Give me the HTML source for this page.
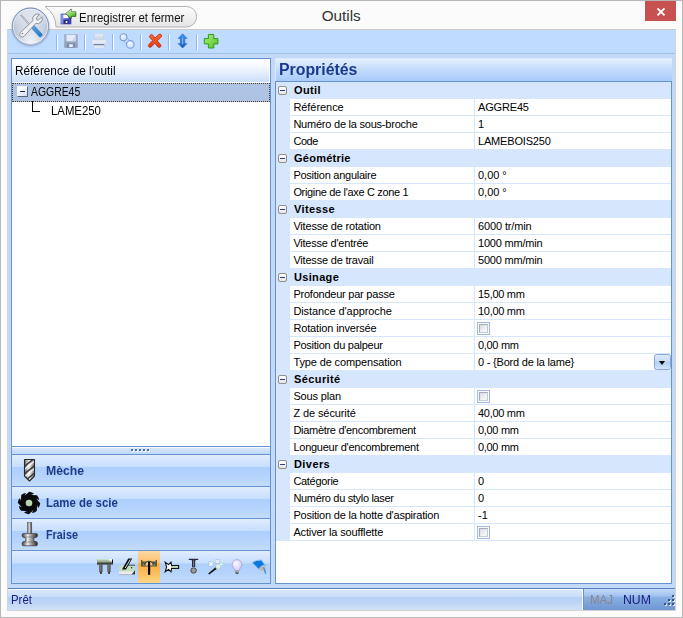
<!DOCTYPE html>
<html lang="fr"><head><meta charset="utf-8"><title>Outils</title>
<style>
*{box-sizing:border-box;margin:0;padding:0}
html,body{width:683px;height:618px;overflow:hidden;background:#fff}
body{position:relative;font-family:"Liberation Sans",sans-serif;font-size:12px;color:#000}
.abs{position:absolute}
#frame{position:absolute;left:0;top:0;width:683px;height:618px;border:1px solid #b7b7b7;background:#fbfbfb}
#title{position:absolute;left:1px;top:1px;width:681px;height:28px;background:#fbfbfb}
#title .t{position:absolute;left:-1.3px;width:683px;top:5.5px;text-align:center;font-size:15.3px;color:#333;letter-spacing:0}
#close{position:absolute;left:645px;top:1px;width:31px;height:20px;background:#c75050}
#main{position:absolute;left:7px;top:29px;width:669px;height:582px;background:#c4d9f8;border:1px solid #d3d3d3;border-top-color:#c9c9c9}
#tbline{position:absolute;left:8px;top:30px;width:667px;height:24px;background:#bfdbff;border-bottom:1px solid #a2c2ee}
.sep{position:absolute;top:34px;width:2px;height:16px;border-left:1px solid #8db6f1;border-right:1px solid #fff}
/* left panel */
#lp{position:absolute;left:11px;top:58px;width:260px;height:526px;border:1px solid #6593cf;background:#fff}
#lph{position:absolute;left:0;top:0;width:258px;height:24px;background:linear-gradient(#ffffff,#f3f8ff 35%,#cbdefa);border-right:1px solid #fff;border-bottom:1px solid #f4f8fe}
#lph span{position:absolute;left:3px;top:5px;font-size:12px;white-space:nowrap;transform-origin:0 0;transform:scaleX(0.982)}
#sel{position:absolute;left:0;top:24px;width:258px;height:19px;background:#afc3e5;border:1px dotted #4f3d1c}
.tx{position:absolute;font-size:12px;white-space:nowrap;transform-origin:0 0}
#split{position:absolute;left:0;top:387px;width:258px;height:9px;border-top:1px solid #6593cf;border-bottom:1px solid #6593cf;background:linear-gradient(#f6faff 0,#f6faff 1px,#d9e8fc 1px,#bed9fd)}
.btn{position:absolute;left:0;width:258px;height:32px;border-bottom:1px solid #6593cf;background:linear-gradient(#e1edfe 0,#c6defe 38%,#adcffc 40%,#b6d4fc 70%,#c4dcfd 100%)}
.btn b{position:absolute;left:33.5px;top:9px;font-size:12.5px;color:#1e3c8a;white-space:nowrap;transform-origin:0 0}
#irow{position:absolute;left:0;top:492px;width:258px;height:32px;background:linear-gradient(#e1edfe 0,#c6defe 38%,#adcffc 40%,#b6d4fc 70%,#c4dcfd 100%)}
#isel{position:absolute;left:126px;top:492px;width:22px;height:32px;background:linear-gradient(#fcd9a4 0,#fcbf6c 38%,#fbab42 40%,#fcc264 75%,#fdd98c 100%)}
/* right panel */
#rph{position:absolute;left:275px;top:58px;width:397px;height:23px;background:linear-gradient(#e4effe,#c5dcfc 45%,#a9cbfa);border-left:1px solid #dce9fc;border-top:1px solid #dce9fc}
#rph b{position:absolute;left:3px;top:1.5px;font-size:16px;color:#1c3a8c;letter-spacing:0;white-space:nowrap;transform-origin:0 0;transform:scaleX(0.99)}
#grid{position:absolute;left:275px;top:81px;width:397px;height:503px;border:1px solid #6593cf;background:#fff;font-size:11px}
#ind{position:absolute;left:0;top:0;width:14px;height:459px;background:#d6e6fc}
.cat{position:absolute;left:0;width:395px;height:17px;background:#d6e6fc}
.cat b{position:absolute;left:18px;top:2px;font-size:11px}
.pm{position:absolute;left:2px;top:4px;width:9px;height:9px;border:1px solid #8f8f8f;border-radius:2px;background:linear-gradient(#fff,#e6e6e6)}
.pm i{position:absolute;left:1px;top:3px;width:5px;height:1px;background:#2c3f9a}
.row{position:absolute;left:14px;width:381px;height:17px;border-bottom:1px solid #d6e6fc}
.lb{position:absolute;left:3.4px;top:2px;white-space:nowrap}
.val{position:absolute;left:184px;top:0;width:197px;height:16px;border-left:1px solid #d6e6fc}
.vt{position:absolute;left:3px;top:2px;white-space:nowrap}
.cb{position:absolute;left:2px;top:2px;width:13px;height:13px;border:1px solid #a5b9db;background:#f9f9f9}
.cb:after{content:"";position:absolute;box-sizing:border-box;left:1px;top:1px;width:9px;height:9px;border:1px solid #a3acba;border-right-color:#c3c9d2;border-bottom-color:#c9ced6;background:linear-gradient(135deg,#d9dce1,#f4f4f5 70%)}
.dd{position:absolute;left:179px;top:0;width:17px;height:16px;border:1px solid #86a9db;border-radius:2.5px;background:linear-gradient(#dde9f9 0,#c9dcf5 6px,#b5cff0 7px,#c4daf5 11px,#d5e5f9 14px)}
.dd i{position:absolute;left:4px;top:6px;width:0;height:0;border-left:3.8px solid transparent;border-right:3.8px solid transparent;border-top:4.4px solid #000}
/* status */
#sb{position:absolute;left:8px;top:588px;width:667px;height:22px;border-top:1px solid #5682c4;background:linear-gradient(#fff 0,#fff 1px,#d8e7fb 1px,#c9ddf8 8px,#b5d0f5 8px,#bdd5f6 14px,#d0e1f8 21px)}
#sbr{position:absolute;left:575px;top:0;width:92px;height:21px;background:linear-gradient(#c6dcfa 0,#bdd5f8 1px,#a2c2f0 7px,#8ab0e6 8px,#7da4dc 14px,#6f96d2 21px);border-left:1px solid #6a92cc}
#sbw{position:absolute;left:574px;top:0;width:1px;height:21px;background:#fff}
#sb .tx{color:#181c7c}
</style></head><body>
<div id="frame"></div>
<div id="title"><div class="t">Outils</div></div>
<div id="close"><svg class="abs" style="left:11px;top:6px" width="10" height="10" viewBox="0 0 10 10"><path d="M1.5 1.4 L8.5 8.4 M8.5 1.4 L1.5 8.4" stroke="#fff" stroke-width="1.9"/></svg></div>
<div id="main"></div>
<div id="tbline"></div>

<!-- quick access pill -->
<svg class="abs" style="left:36px;top:2px" width="170" height="30" viewBox="0 0 170 30">
<defs><linearGradient id="pg" x1="0" y1="0" x2="0" y2="1"><stop offset="0" stop-color="#fdfdfd"/><stop offset="0.5" stop-color="#f1f1f2"/><stop offset="1" stop-color="#e4e4e6"/></linearGradient></defs>
<path d="M9 4.5 H150.4 A10.25 10.25 0 0 1 150.4 25 H20 A25 25 0 0 0 9 4.5 Z" fill="url(#pg)" stroke="#b2b2b4" stroke-width="1"/>
</svg>
<div class="tx" style="left:78.6px;top:10.5px;font-size:12px;color:#111;transform:scaleX(0.958)">Enregistrer et fermer</div>

<!-- orb -->
<svg class="abs" style="left:10px;top:6px;overflow:visible;filter:drop-shadow(0 1px 1px rgba(70,90,130,.5))" width="42" height="42" viewBox="0 0 42 42">
<defs>
<radialGradient id="og" cx="0.5" cy="0.42" r="0.62"><stop offset="0" stop-color="#dbe2ed"/><stop offset="0.6" stop-color="#c8d1e1"/><stop offset="1" stop-color="#a7b5ce"/></radialGradient>
<radialGradient id="og2" cx="0.5" cy="1.02" r="0.55"><stop offset="0" stop-color="#fff" stop-opacity="0.95"/><stop offset="0.6" stop-color="#fff" stop-opacity="0.35"/><stop offset="1" stop-color="#fff" stop-opacity="0"/></radialGradient>
<linearGradient id="ob" x1="0" y1="0" x2="0" y2="1"><stop offset="0" stop-color="#6c86b4"/><stop offset="0.6" stop-color="#8da0c4"/><stop offset="1" stop-color="#b4c0d8"/></linearGradient>
<linearGradient id="ogl" x1="0" y1="0" x2="0" y2="1"><stop offset="0" stop-color="#fff" stop-opacity="0.75"/><stop offset="1" stop-color="#fff" stop-opacity="0.1"/></linearGradient>
<linearGradient id="hb" x1="0" y1="0" x2="1" y2="1"><stop offset="0" stop-color="#5aa6e6"/><stop offset="1" stop-color="#1f74c2"/></linearGradient>
</defs>
<circle cx="20.5" cy="20.2" r="18.2" fill="url(#og)"/>
<circle cx="20.5" cy="20.2" r="18.2" fill="url(#og2)"/>
<path d="M4 17.5 A16.6 16.6 0 0 1 37 17.5 Q20.5 23.5 4 17.5Z" fill="url(#ogl)" opacity="0.55"/>
<circle cx="20.5" cy="20.2" r="17.3" fill="none" stroke="#fff" stroke-width="0.9" opacity="0.7"/>
<circle cx="20.5" cy="20.2" r="18.2" fill="none" stroke="url(#ob)" stroke-width="1"/>
<!-- screwdriver -->
<path d="M10.6 9.2 L11.6 9 L21 19 L19.6 20.2 Z" fill="#d4d6da" stroke="#8a8c92" stroke-width="0.6"/>
<path d="M20.9 21.4 L23.9 19.3 L32.3 28.3 Q32.4 29.4 31.3 30.4 Q30.2 31.2 29.3 30.8 Z" fill="url(#hb)" stroke="#2a78c0" stroke-width="0.5"/>
<!-- wrench -->
<path d="M23 14.5 A4.8 4.8 0 0 1 29.57 8.47 L26.6 11.5 Q26 13.2 27.1 14 Q28 14.6 28.9 13.7 L31.83 10.73 A4.8 4.8 0 0 1 25.8 17.3 L14.2 30.2 A2.4 2.4 0 0 1 10.4 26.6 Z" fill="#f0f1f3" stroke="#868a92" stroke-width="0.9" stroke-linejoin="round"/>
<circle cx="12.4" cy="27.6" r="0.8" fill="#7a7d86"/>
</svg>

<!-- save&close icon -->
<svg class="abs" style="left:60px;top:8px" width="18" height="18" viewBox="0 0 18 18">
<defs><linearGradient id="fl" x1="0" y1="0" x2="1" y2="0"><stop offset="0" stop-color="#9fc2f6"/><stop offset="0.3" stop-color="#5a66d6"/><stop offset="1" stop-color="#3a3abc"/></linearGradient>
<linearGradient id="ga" x1="0" y1="0" x2="1" y2="1"><stop offset="0" stop-color="#d4f2c4"/><stop offset="0.5" stop-color="#7fd450"/><stop offset="1" stop-color="#3c9a24"/></linearGradient></defs>
<rect x="1" y="6" width="10" height="10" fill="url(#fl)" stroke="#3236b0" stroke-width="0.6"/>
<rect x="3.3" y="6.6" width="5.2" height="3.6" fill="#fff"/>
<rect x="3.6" y="12.2" width="5" height="3.4" fill="#20246a"/>
<rect x="5.6" y="13" width="1.8" height="2" fill="#e8f4e8"/>
<path d="M5.8 5.6 L11.2 1 L11.2 3.8 L15.8 3.8 L15.8 8.4 L11.2 8.4 L11.2 11 Z" fill="url(#ga)" stroke="#1f4a18" stroke-width="0.7" stroke-linejoin="round"/>
<path d="M6.6 5.5 L10.7 2 L10.7 4.3 L15.3 4.3" fill="none" stroke="#d4f4c4" stroke-width="0.7" opacity="0.9"/>
</svg>

<!-- toolbar: save (disabled) -->
<svg class="abs" style="left:64px;top:34px" width="14" height="14" viewBox="0 0 14 14">
<defs><linearGradient id="sv" x1="0" y1="0" x2="0" y2="1"><stop offset="0" stop-color="#aab6cc"/><stop offset="1" stop-color="#8c9ab6"/></linearGradient></defs>
<rect x="0.3" y="0.3" width="13.4" height="13.4" rx="0.8" fill="url(#sv)" stroke="#9eabc4" stroke-width="0.6"/>
<rect x="2.5" y="0.8" width="9" height="6.4" fill="#e4ebf8"/>
<path d="M11.5 2.5 L11.5 7.2 L7 7.2 Z" fill="#cfd9ec"/>
<rect x="3" y="9.2" width="8" height="4.5" fill="#7f8dab"/>
<rect x="5.2" y="10.2" width="3.6" height="2.8" fill="#e9effa"/>
</svg>
<!-- toolbar: print (disabled) -->
<svg class="abs" style="left:91px;top:33px" width="16" height="16" viewBox="0 0 16 16">
<defs><linearGradient id="pr1" x1="0" y1="0" x2="0" y2="1"><stop offset="0" stop-color="#eef2fa"/><stop offset="1" stop-color="#b9c4d8"/></linearGradient>
<linearGradient id="pr2" x1="0" y1="0" x2="0" y2="1"><stop offset="0" stop-color="#eef2fa"/><stop offset="1" stop-color="#d2dbec"/></linearGradient></defs>
<rect x="3.5" y="0.8" width="9" height="7.5" rx="0.8" fill="url(#pr1)" stroke="#c4cfe4" stroke-width="0.5"/>
<rect x="0.6" y="6.8" width="14.8" height="6.2" rx="1.6" fill="url(#pr2)" stroke="#c3cee4" stroke-width="0.6"/>
<rect x="2.6" y="11" width="10.8" height="1.3" fill="#6e80a4"/>
<rect x="2.8" y="12.6" width="10.4" height="2.6" rx="0.6" fill="#e6ecf7" stroke="#bcc8de" stroke-width="0.5"/>
</svg>
<!-- toolbar: link -->
<svg class="abs" style="left:119px;top:33px" width="16" height="16" viewBox="0 0 16 16">
<defs><radialGradient id="lk" cx="0.4" cy="0.35" r="0.7"><stop offset="0" stop-color="#f4f9ff"/><stop offset="1" stop-color="#c3d8f6"/></radialGradient></defs>
<path d="M3 6 L9.6 13 L12.8 10 L6.2 2.8 Z" fill="#cfe0f6" stroke="#8fafe0" stroke-width="0.9"/>
<circle cx="4.5" cy="4.2" r="3.4" fill="url(#lk)" stroke="#7c9edc" stroke-width="1.1"/>
<circle cx="11.3" cy="11.4" r="3.8" fill="url(#lk)" stroke="#7c9edc" stroke-width="1.1"/>
</svg>
<!-- toolbar: red X -->
<svg class="abs" style="left:147px;top:33px" width="16" height="16" viewBox="0 0 16 16">
<defs><linearGradient id="rx" x1="0" y1="0" x2="0" y2="1"><stop offset="0" stop-color="#fa6a3a"/><stop offset="1" stop-color="#e23612"/></linearGradient></defs>
<path d="M3.2 2.2 Q4.6 0.8 5.8 2.2 L8 5 L11.6 1.6 Q13.2 0.6 14.4 1.8 Q15.2 3 14 4.2 L10.2 7.8 L13.6 11.6 Q14.6 13 13.4 14 Q12 15 10.8 13.8 L7.8 10.2 L4.4 13.8 Q3 15 1.8 13.8 Q0.8 12.4 2 11.2 L5.6 7.6 L2.8 4.4 Q2 3.2 3.2 2.2 Z" fill="url(#rx)" stroke="#c22c0c" stroke-width="0.8"/>
</svg>
<!-- toolbar: up/down -->
<svg class="abs" style="left:176px;top:33px" width="14" height="16" viewBox="0 0 14 16">
<defs><linearGradient id="ud" x1="0" y1="0" x2="0" y2="1"><stop offset="0" stop-color="#3a9af8"/><stop offset="1" stop-color="#1a56b8"/></linearGradient>
<linearGradient id="ud2" x1="0" y1="0" x2="1" y2="0"><stop offset="0" stop-color="#2a7ae0"/><stop offset="0.5" stop-color="#9cc0ee"/><stop offset="1" stop-color="#2a6ad0"/></linearGradient></defs>
<path d="M6.6 0.8 L11 5.4 L8.8 5.4 L8.8 10.6 L11 10.6 L6.6 15 L2.2 10.6 L4.4 10.6 L4.4 5.4 L2.2 5.4 Z" fill="url(#ud)" stroke="#1f6ad8" stroke-width="0.6" stroke-linejoin="round"/>
<rect x="5.3" y="4.4" width="2.6" height="7" fill="url(#ud2)" opacity="0.85"/>
</svg>
<!-- toolbar: plus -->
<svg class="abs" style="left:203px;top:33px" width="16" height="16" viewBox="0 0 16 16">
<defs><linearGradient id="gp" x1="0" y1="0" x2="1" y2="1"><stop offset="0" stop-color="#b4f07c"/><stop offset="1" stop-color="#4cc224"/></linearGradient></defs>
<path d="M5.4 1.5 H10.8 V5.6 H14.9 V10.9 H10.8 V15 H5.4 V10.9 H1.3 V5.6 H5.4 Z" fill="url(#gp)" stroke="#2c9c1c" stroke-width="1" stroke-linejoin="round"/>
</svg>

<!-- toolbar -->
<div class="sep" style="left:56px"></div><div class="sep" style="left:84px"></div><div class="sep" style="left:112px"></div>
<div class="sep" style="left:140px"></div><div class="sep" style="left:168px"></div><div class="sep" style="left:196px"></div>

<div id="lp">
 <div id="lph"><span>Référence de l'outil</span></div>
 <div id="sel"></div>
 <div class="tx" style="left:19.4px;top:26px;transform:scaleX(0.868)">AGGRE45</div>
 <div class="tx" style="left:38.7px;top:45px;transform:scaleX(0.947)">LAME250</div>
 <div class="abs" style="left:20px;top:42px;width:8px;height:11px;border-left:1px solid #000;border-bottom:1px solid #000"></div>
 <div class="abs" style="left:5px;top:27px;width:11px;height:11px;border:1px solid #596681;border-top-color:#eef2fa;border-left-color:#eef2fa;background:linear-gradient(135deg,#fff 20%,#d2dcee)"><i class="abs" style="left:2px;top:4px;width:5px;height:1.4px;background:#1f2a44"></i></div>
 <div id="split"><i class="abs" style="left:119px;top:2px;width:2px;height:2px;background:#4a6fb5;box-shadow:1px 1px 0 #fff"></i><i class="abs" style="left:123px;top:2px;width:2px;height:2px;background:#4a6fb5;box-shadow:1px 1px 0 #fff"></i><i class="abs" style="left:127px;top:2px;width:2px;height:2px;background:#4a6fb5;box-shadow:1px 1px 0 #fff"></i><i class="abs" style="left:131px;top:2px;width:2px;height:2px;background:#4a6fb5;box-shadow:1px 1px 0 #fff"></i><i class="abs" style="left:135px;top:2px;width:2px;height:2px;background:#4a6fb5;box-shadow:1px 1px 0 #fff"></i></div>
 <div class="btn" style="top:396px"><b style="transform:scaleX(0.98)">Mèche</b></div>
 <div class="btn" style="top:428px"><b style="transform:scaleX(0.914)">Lame de scie</b></div>
 <div class="btn" style="top:460px"><b style="transform:scaleX(0.867)">Fraise</b></div>
 <div id="irow"></div><div id="isel"></div>
</div>


<!-- Mèche icon (drill bit) -->
<svg class="abs" style="left:22px;top:458px" width="16" height="25" viewBox="0 0 16 25">
<defs><linearGradient id="db" x1="0" y1="0" x2="1" y2="0"><stop offset="0" stop-color="#6a6a6a"/><stop offset="0.45" stop-color="#f4f4f4"/><stop offset="1" stop-color="#7a7a7a"/></linearGradient>
<clipPath id="dbc"><path d="M2.5 1.5 H12.5 V18 L7.5 23 L2.5 18 Z"/></clipPath></defs>
<path d="M2.5 1.5 H12.5 V18 L7.5 23 L2.5 18 Z" fill="url(#db)"/>
<g clip-path="url(#dbc)" stroke="#3c3c3c" stroke-width="1.5" fill="none">
<path d="M1 9.5 L14 -1"/><path d="M1 17 L14 6.5"/><path d="M1 24.5 L14 14"/>
</g>
<g clip-path="url(#dbc)" stroke="#fff" stroke-width="1.2" fill="none" opacity="0.9">
<path d="M1 12.5 L14 2"/><path d="M1 20 L14 9.5"/>
</g>
<path d="M2.5 1.5 H12.5 V18 L7.5 23 L2.5 18 Z" fill="none" stroke="#2a2a2a" stroke-width="1.1" stroke-linejoin="round"/>
</svg>
<!-- Lame de scie icon -->
<svg class="abs" style="left:17px;top:491px" width="24" height="24" viewBox="-12 -12 24 24">
<g fill="#0a0a0a">
<circle r="8.5"/>
<g id="tooth"><path d="M-4 -7.4 L0.2 -11.2 Q3.4 -10.8 5 -9.2 L2 -8 L3 -7.2 Z"/></g>
<use href="#tooth" transform="rotate(45)"/><use href="#tooth" transform="rotate(90)"/><use href="#tooth" transform="rotate(135)"/>
<use href="#tooth" transform="rotate(180)"/><use href="#tooth" transform="rotate(225)"/><use href="#tooth" transform="rotate(270)"/><use href="#tooth" transform="rotate(315)"/>
</g>
<circle r="3.3" fill="#b9d6b2"/>
</svg>
<!-- Fraise icon -->
<svg class="abs" style="left:21px;top:521px" width="18" height="26" viewBox="0 0 18 26">
<defs><linearGradient id="fr" x1="0" y1="0" x2="1" y2="0"><stop offset="0" stop-color="#3a3a3a"/><stop offset="0.35" stop-color="#ececec"/><stop offset="0.65" stop-color="#8e8e8e"/><stop offset="1" stop-color="#2a2a2a"/></linearGradient></defs>
<rect x="6.6" y="1.5" width="4.2" height="12" fill="url(#fr)" stroke="#555" stroke-width="0.5"/>
<path d="M2.2 12.6 H15.4 Q16.4 12.6 16.4 13.8 V15 Q16.4 16 15.2 16.2 L12.8 17 V20 L15.4 20.8 Q16.4 21 16.4 22 V23.6 Q16.4 24.8 15.2 24.8 H2.6 Q1.2 24.8 1.2 23.6 V22 Q1.2 21 2.4 20.8 L4.8 20 V17 L2.4 16.2 Q1.2 16 1.2 15 V13.8 Q1.2 12.6 2.2 12.6 Z" fill="url(#fr)" stroke="#3a3a3a" stroke-width="0.7"/>
<path d="M1.6 16 H16 M1.6 21 H16" stroke="#444" stroke-width="0.6" opacity="0.7"/>
</svg>

<!-- small icons row -->
<svg class="abs" style="left:96px;top:557px" width="18" height="18" viewBox="0 0 18 18">
<rect x="1" y="2" width="16" height="5.4" fill="#c9dfc2"/>
<rect x="1" y="3.6" width="14" height="1" fill="#7e8e7c"/>
<rect x="13" y="2" width="3" height="1.6" fill="#fff"/>
<path d="M1 6.4 H17 V2.4 H16 V5.6 H1 Z M1 6.2 H17 V7.6 H1 Z" fill="#111"/>
<rect x="3.4" y="7.6" width="3" height="7.6" fill="#2e2e2e"/><rect x="4.3" y="7.6" width="1.1" height="7" fill="#9a9a8a"/>
<rect x="11.5" y="7.6" width="3" height="7.6" fill="#2e2e2e"/><rect x="12.4" y="7.6" width="1.1" height="7" fill="#9a9a8a"/>
<rect x="4.2" y="15" width="1.5" height="2" fill="#222"/><rect x="12.3" y="15" width="1.5" height="2" fill="#222"/>
</svg>
<svg class="abs" style="left:118px;top:557px" width="18" height="19" viewBox="0 0 18 19">
<path d="M1 8.2 H17 V14.6 H1 Z" fill="#c2dfba"/>
<path d="M1 14.4 H17 V17.6 H1 Z" fill="#ececec"/>
<path d="M17 13.2 V17.6 H13.6 Z" fill="#3a3a2a"/>
<path d="M9 8.2 H17" stroke="#222" stroke-width="0.8"/>
<path d="M1 17.6 H14" stroke="#999" stroke-width="0.6"/>
<path d="M10.2 1.6 L14.2 1.6 L8 12.4 L4 12.4 Z" fill="#111"/>
<path d="M12.2 2.6 L7.2 11" stroke="#eee" stroke-width="0.9"/>
<circle cx="3" cy="11" r="0.6" fill="#fff"/><circle cx="13.6" cy="10.8" r="0.7" fill="#222"/>
</svg>
<svg class="abs" style="left:140px;top:558px" width="18" height="18" viewBox="0 0 18 18">
<path d="M1 2.1 H2.4 V3.5 H15.6 V2.1 H17 V8.5 H1 Z" fill="#575a3e"/>
<path d="M5.2 7.6 A3.8 3.8 0 0 1 12.8 7.6 Z" fill="#f4c68c"/>
<path d="M4.6 7.6 A4.4 4.4 0 0 1 13.4 7.6" fill="none" stroke="#4a4d34" stroke-width="1.1"/>
<path d="M3 6.4 L4.4 7.4 M15 6.4 L13.6 7.4" stroke="#f4c68c" stroke-width="0.7"/>
<rect x="8" y="3.8" width="2.2" height="13" fill="#050505"/>
</svg>
<svg class="abs" style="left:164px;top:561px" width="16" height="12" viewBox="0 0 16 12">
<path d="M1.2 1.2 L4.6 3.6 L7 1.2 L7.6 4.6 L14.6 4.6 V7.4 H7.6 L7 10.8 L4.6 8.4 L1.2 10.8 L2.6 6 Z" fill="#f6f8f6" stroke="#111" stroke-width="1.1" stroke-linejoin="miter"/>
<rect x="8.6" y="5.2" width="5.4" height="1.4" fill="#bcd8b8"/>
</svg>
<svg class="abs" style="left:188px;top:558px" width="12" height="17" viewBox="0 0 12 17">
<path d="M0.8 0.8 H10.2 V2 H7.6 L7.2 3.4 V9 H4 V3.4 L3.6 2 H0.8 Z" fill="#2a2a3a"/>
<rect x="5" y="2.4" width="1.2" height="6.4" fill="#77777f"/>
<circle cx="5.6" cy="12.5" r="2.7" fill="#9a9a9a" stroke="#3a3a3a" stroke-width="0.9"/>
</svg>
<svg class="abs" style="left:206px;top:558px" width="18" height="18" viewBox="0 0 18 18">
<path d="M2.2 15.4 L3.2 16.4 L12.4 9.8 L11 8 Z" fill="#161616"/>
<circle cx="12.3" cy="8.5" r="2.7" fill="#dcefe9" stroke="#a9c6c6" stroke-width="0.7"/>
<path d="M3.6 3.2 L5 4.6 L6.4 3.2 L7.8 4.6 L6.4 6 L7.8 7.4 L6.4 8.8 L5 7.4 L3.6 8.8 L2.2 7.4 L3.6 6 L2.2 4.6 Z" fill="#f2f8fe" stroke="#86a8d6" stroke-width="0.6"/>
<path d="M10.2 1.2 L11.4 2.4 L12.6 1.2 L13.8 2.4 L12.6 3.6 L13.8 4.8 L12.6 6 L11.4 4.8 L10.2 6 L9 4.8 L10.2 3.6 L9 2.4 Z" fill="#f4f9fe" stroke="#8cacd8" stroke-width="0.6"/>
<circle cx="15.2" cy="6.4" r="1.3" fill="#f8fcff" stroke="#a9c6ea" stroke-width="0.5"/>
</svg>
<svg class="abs" style="left:231px;top:558px" width="12" height="17" viewBox="0 0 12 17">
<defs><radialGradient id="bl" cx="0.4" cy="0.35" r="0.7"><stop offset="0" stop-color="#fbfaff"/><stop offset="1" stop-color="#cfc8f0"/></radialGradient></defs>
<path d="M6 1.6 A4.9 4.9 0 0 1 9.6 9.8 Q8.4 11 8.2 12.8 H3.8 Q3.6 11 2.4 9.8 A4.9 4.9 0 0 1 6 1.6 Z" fill="url(#bl)" stroke="#aaa0dc" stroke-width="0.8"/>
<rect x="4" y="12.8" width="4" height="2.6" rx="0.6" fill="#777"/>
<rect x="4" y="13.4" width="4" height="0.7" fill="#c8c8c8"/>
<rect x="5" y="15.2" width="2" height="0.9" fill="#444"/>
</svg>
<svg class="abs" style="left:251px;top:558px" width="17" height="17" viewBox="0 0 17 17">
<path d="M1.4 4.4 Q5.4 1.8 10 2 L15 9 L9.4 12.6 Z" fill="#0b78e2" stroke="#3a96ee" stroke-width="0.5"/>
<path d="M1.4 4.4 Q5.4 1.8 10 2" stroke="#a8d2f8" stroke-width="0.8" fill="none"/>
<ellipse cx="11.9" cy="10.6" rx="3.4" ry="2.8" transform="rotate(-30 11.9 10.6)" fill="#b6b6b6" stroke="#dadada" stroke-width="0.7"/>
<path d="M11.8 9.8 Q13.4 11.6 13.2 13.4 L14.2 16 L15.2 15.6 L14.6 12.4 Q14.2 10.4 12.8 9.2 Z" fill="#3d92e4"/>
</svg>

<div id="rph"><b>Propriétés</b></div>
<div id="grid">
<div id="ind"></div>
<div class="cat" style="top:0px"><span class="pm"><i></i></span><b style="letter-spacing:0.35px">Outil</b></div>
<div class="row" style="top:17px"><span class="lb" style="letter-spacing:-0.05px">Référence</span><span class="val"><span class="vt" style="letter-spacing:-0.167px">AGGRE45</span></span></div>
<div class="row" style="top:34px"><span class="lb" style="letter-spacing:-0.226px">Numéro de la sous-broche</span><span class="val"><span class="vt" style="letter-spacing:0px">1</span></span></div>
<div class="row" style="top:51px"><span class="lb" style="letter-spacing:-0.433px">Code</span><span class="val"><span class="vt" style="letter-spacing:-0.18px">LAMEBOIS250</span></span></div>
<div class="cat" style="top:68px"><span class="pm"><i></i></span><b style="letter-spacing:0.25px">Géométrie</b></div>
<div class="row" style="top:85px"><span class="lb" style="letter-spacing:-0.253px">Position angulaire</span><span class="val"><span class="vt" style="letter-spacing:-0.02px">0,00 °</span></span></div>
<div class="row" style="top:102px"><span class="lb" style="letter-spacing:-0.329px">Origine de l'axe C zone 1</span><span class="val"><span class="vt" style="letter-spacing:-0.02px">0,00 °</span></span></div>
<div class="cat" style="top:119px"><span class="pm"><i></i></span><b style="letter-spacing:0.383px">Vitesse</b></div>
<div class="row" style="top:136px"><span class="lb" style="letter-spacing:-0.184px">Vitesse de rotation</span><span class="val"><span class="vt" style="letter-spacing:-0.13px">6000 tr/min</span></span></div>
<div class="row" style="top:153px"><span class="lb" style="letter-spacing:-0.22px">Vitesse d'entrée</span><span class="val"><span class="vt" style="letter-spacing:-0.21px">1000 mm/min</span></span></div>
<div class="row" style="top:170px"><span class="lb" style="letter-spacing:-0.194px">Vitesse de travail</span><span class="val"><span class="vt" style="letter-spacing:-0.21px">5000 mm/min</span></span></div>
<div class="cat" style="top:187px"><span class="pm"><i></i></span><b style="letter-spacing:0.333px">Usinage</b></div>
<div class="row" style="top:204px"><span class="lb" style="letter-spacing:-0.231px">Profondeur par passe</span><span class="val"><span class="vt" style="letter-spacing:-0.286px">15,00 mm</span></span></div>
<div class="row" style="top:221px"><span class="lb" style="letter-spacing:-0.078px">Distance d'approche</span><span class="val"><span class="vt" style="letter-spacing:-0.286px">10,00 mm</span></span></div>
<div class="row" style="top:238px"><span class="lb" style="letter-spacing:-0.143px">Rotation inversée</span><span class="val"><span class="cb"></span></span></div>
<div class="row" style="top:255px"><span class="lb" style="letter-spacing:-0.256px">Position du palpeur</span><span class="val"><span class="vt" style="letter-spacing:-0.317px">0,00 mm</span></span></div>
<div class="row" style="top:272px"><span class="lb" style="letter-spacing:-0.126px">Type de compensation</span><span class="val"><span class="vt" style="letter-spacing:-0.2px">0 - {Bord de la lame}</span><span class="dd"><i></i></span></span></div>
<div class="cat" style="top:289px"><span class="pm"><i></i></span><b style="letter-spacing:0.4px">Sécurité</b></div>
<div class="row" style="top:306px"><span class="lb" style="letter-spacing:-0.137px">Sous plan</span><span class="val"><span class="cb"></span></span></div>
<div class="row" style="top:323px"><span class="lb" style="letter-spacing:-0.1px">Z de sécurité</span><span class="val"><span class="vt" style="letter-spacing:-0.286px">40,00 mm</span></span></div>
<div class="row" style="top:340px"><span class="lb" style="letter-spacing:-0.296px">Diamètre d'encombrement</span><span class="val"><span class="vt" style="letter-spacing:-0.317px">0,00 mm</span></span></div>
<div class="row" style="top:357px"><span class="lb" style="letter-spacing:-0.25px">Longueur d'encombrement</span><span class="val"><span class="vt" style="letter-spacing:-0.317px">0,00 mm</span></span></div>
<div class="cat" style="top:374px"><span class="pm"><i></i></span><b style="letter-spacing:0.42px">Divers</b></div>
<div class="row" style="top:391px"><span class="lb" style="letter-spacing:-0.3px">Catégorie</span><span class="val"><span class="vt" style="letter-spacing:0px">0</span></span></div>
<div class="row" style="top:408px"><span class="lb" style="letter-spacing:-0.32px">Numéro du stylo laser</span><span class="val"><span class="vt" style="letter-spacing:0px">0</span></span></div>
<div class="row" style="top:425px"><span class="lb" style="letter-spacing:-0.206px">Position de la hotte d'aspiration</span><span class="val"><span class="vt" style="letter-spacing:0px">-1</span></span></div>
<div class="row" style="top:442px"><span class="lb" style="letter-spacing:-0.14px">Activer la soufflette</span><span class="val"><span class="cb"></span></span></div>
</div>

<div id="sb">
 <div class="tx" style="left:3px;top:4px;transform:scaleX(0.95)">Prêt</div>
 <div id="sbw"></div>
 <div id="sbr"><div class="tx" style="left:6.4px;top:4px;color:#8c8686;transform:scaleX(0.96)">MAJ</div><div class="tx" style="left:39px;top:4px;transform:scaleX(1.02)">NUM</div><i class="abs" style="left:88px;top:6px;width:2px;height:2px;background:#3c507e;box-shadow:1px 1px 0 #dce8fa"></i><i class="abs" style="left:84px;top:10px;width:2px;height:2px;background:#3c507e;box-shadow:1px 1px 0 #dce8fa"></i><i class="abs" style="left:88px;top:10px;width:2px;height:2px;background:#3c507e;box-shadow:1px 1px 0 #dce8fa"></i><i class="abs" style="left:80px;top:14px;width:2px;height:2px;background:#3c507e;box-shadow:1px 1px 0 #dce8fa"></i><i class="abs" style="left:84px;top:14px;width:2px;height:2px;background:#3c507e;box-shadow:1px 1px 0 #dce8fa"></i><i class="abs" style="left:88px;top:14px;width:2px;height:2px;background:#3c507e;box-shadow:1px 1px 0 #dce8fa"></i></div>
</div>
</body></html>
